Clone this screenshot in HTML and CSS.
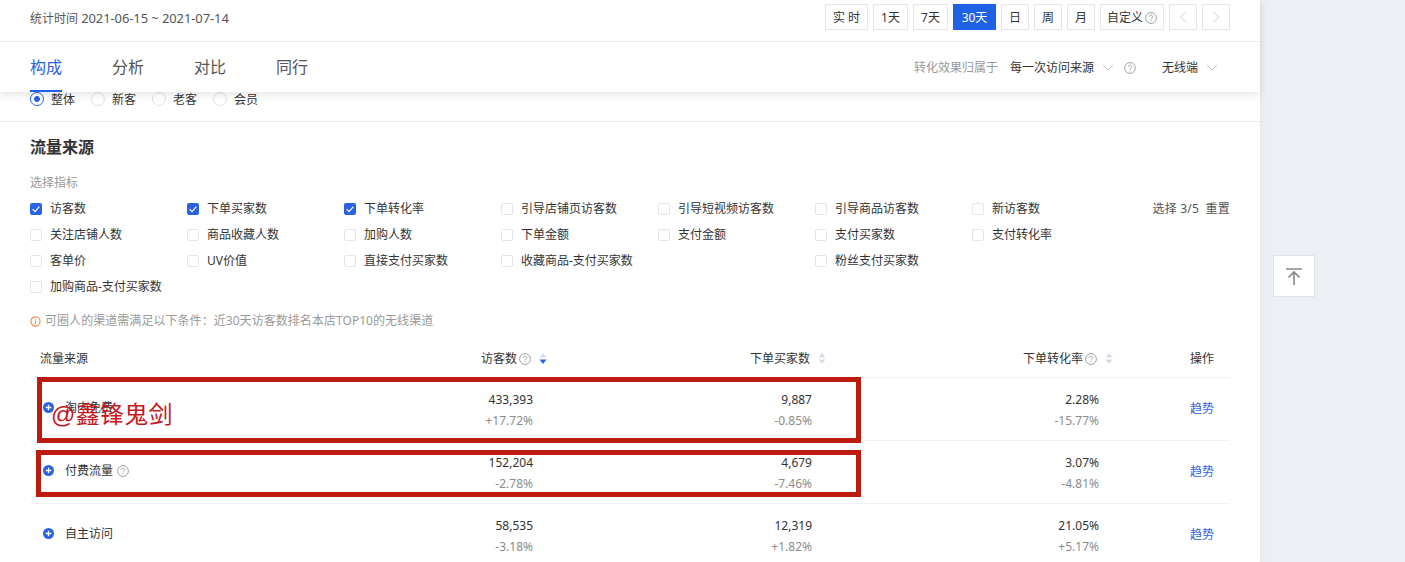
FILE: index.html
```html
<!DOCTYPE html>
<html lang="zh-CN">

<head>
    <meta charset="UTF-8">
    <title>流量来源</title>
    <link rel="stylesheet" href="styles.css">
</head>

<body>
    <svg class="defs" width="0" height="0">
        <symbol id="help" viewBox="0 0 12 12">
            <circle cx="6" cy="6" r="5.4" fill="none" stroke="currentColor" />
            <path d="M4.4 4.7a1.6 1.6 0 1 1 2.5 1.3c-.6.4-.9.7-.9 1.4" fill="none" stroke="currentColor" />
            <path d="M5.5 8.3h1v1h-1z" fill="currentColor" />
        </symbol>
        <symbol id="plus" viewBox="0 0 11 11">
            <circle cx="5.5" cy="5.5" r="5.5" fill="#2a62e6" />
            <path d="M2.7 5.5h5.6M5.5 2.7v5.6" stroke="#fff" stroke-width="1.3" />
        </symbol>
        <symbol id="tick" viewBox="0 0 12 12">
            <path d="M2.6 6.2l2.4 2.4 4.4-5" fill="none" stroke="#fff" stroke-width="1.2" />
        </symbol>
        <symbol id="chevron" viewBox="0 0 12 8">
            <path d="M1 1l5 5 5-5" fill="none" stroke="currentColor" />
        </symbol>
    </svg>

    <div class="page">
        <div class="panel">
            <header class="top">
                <div class="date-row">
                    <span class="date-text">统计时间 <span class="date-range">2021-06-15 ~ 2021-07-14</span></span>
                    <div class="ranges">
                        <button class="range w43">实 时</button>
                        <button class="range w35">1天</button>
                        <button class="range w35">7天</button>
                        <button class="range w43 active">30天</button>
                        <button class="range w28">日</button>
                        <button class="range w28">周</button>
                        <button class="range w28">月</button>
                        <button class="range w64">自定义<svg class="help-icon"><use href="#help" /></svg></button>
                        <button class="range w28 arrow">
                            <svg width="8" height="12" viewBox="0 0 8 12"><path d="M6.5 1L1.5 6l5 5" fill="none" stroke="currentColor" /></svg>
                        </button>
                        <button class="range w28 arrow">
                            <svg width="8" height="12" viewBox="0 0 8 12"><path d="M1.5 1l5 5-5 5" fill="none" stroke="currentColor" /></svg>
                        </button>
                    </div>
                </div>
                <div class="tab-row">
                    <nav class="tabs">
                        <a class="tab current">构成</a>
                        <a class="tab">分析</a>
                        <a class="tab">对比</a>
                        <a class="tab">同行</a>
                    </nav>
                    <div class="tab-options">
                        <span class="muted">转化效果归属于</span>
                        <span class="select-text first">每一次访问来源</span>
                        <svg class="chevron"><use href="#chevron" /></svg>
                        <svg class="help-icon attr-help"><use href="#help" /></svg>
                        <span class="select-text second">无线端</span>
                        <svg class="chevron"><use href="#chevron" /></svg>
                    </div>
                </div>
            </header>

            <div class="radios">
                <label class="radio"><i class="dot on"></i>整体</label>
                <label class="radio"><i class="dot"></i>新客</label>
                <label class="radio"><i class="dot"></i>老客</label>
                <label class="radio"><i class="dot"></i>会员</label>
            </div>

            <section class="content">
                <h2 class="title">流量来源</h2>
                <p class="muted pick-label">选择指标</p>

                <div class="metrics">
                    <div class="metric-grid">
                        <label class="check"><i class="box on"><svg><use href="#tick" /></svg></i>访客数</label>
                        <label class="check"><i class="box on"><svg><use href="#tick" /></svg></i>下单买家数</label>
                        <label class="check"><i class="box on"><svg><use href="#tick" /></svg></i>下单转化率</label>
                        <label class="check"><i class="box"></i>引导店铺页访客数</label>
                        <label class="check"><i class="box"></i>引导短视频访客数</label>
                        <label class="check"><i class="box"></i>引导商品访客数</label>
                        <label class="check"><i class="box"></i>新访客数</label>
                        <label class="check"><i class="box"></i>关注店铺人数</label>
                        <label class="check"><i class="box"></i>商品收藏人数</label>
                        <label class="check"><i class="box"></i>加购人数</label>
                        <label class="check"><i class="box"></i>下单金额</label>
                        <label class="check"><i class="box"></i>支付金额</label>
                        <label class="check"><i class="box"></i>支付买家数</label>
                        <label class="check"><i class="box"></i>支付转化率</label>
                        <label class="check"><i class="box"></i>客单价</label>
                        <label class="check"><i class="box"></i>UV价值</label>
                        <label class="check"><i class="box"></i>直接支付买家数</label>
                        <label class="check"><i class="box"></i>收藏商品-支付买家数</label>
                        <div></div>
                        <label class="check"><i class="box"></i>粉丝支付买家数</label>
                        <div></div>
                        <label class="check"><i class="box"></i>加购商品-支付买家数</label>
                    </div>
                    <div class="metric-count">选择 3/5&nbsp;&nbsp;重置</div>
                </div>

                <p class="note">
                    <svg class="note-icon" viewBox="0 0 12 12">
                        <circle cx="6" cy="6" r="5" fill="none" stroke="#ee8a4c" stroke-width="1.2" />
                        <path d="M6 5v3.6M6 3v1.1" stroke="#ee8a4c" stroke-width="1.2" />
                    </svg>
                    可圈人的渠道需满足以下条件：近30天访客数排名本店TOP10的无线渠道
                </p>

                <div class="table-wrap">
                    <div class="row head">
                        <div class="name">流量来源</div>
                        <div class="head-cell">访客数<svg class="help-icon"><use href="#help" /></svg>
                            <svg class="sort" viewBox="0 0 8 11"><path d="M4 0l3.5 4.500h-7z" fill="#d5dcea" /><path d="M4 11l3.5-4.500h-7z" fill="#2a62e6" /></svg>
                        </div>
                        <div class="head-cell">下单买家数
                            <svg class="sort" viewBox="0 0 8 11"><path d="M4 0l3.5 4.500h-7z" fill="#d5dcea" /><path d="M4 11l3.5-4.500h-7z" fill="#d5dcea" /></svg>
                        </div>
                        <div class="head-cell">下单转化率<svg class="help-icon"><use href="#help" /></svg>
                            <svg class="sort" viewBox="0 0 8 11"><path d="M4 0l3.5 4.500h-7z" fill="#d5dcea" /><path d="M4 11l3.5-4.500h-7z" fill="#d5dcea" /></svg>
                        </div>
                        <div class="action">操作</div>
                    </div>

                    <div class="row">
                        <div class="name"><svg class="plus"><use href="#plus" /></svg>淘内免费</div>
                        <div class="num">433,393<span>+17.72%</span></div>
                        <div class="num">9,887<span>-0.85%</span></div>
                        <div class="num">2.28%<span>-15.77%</span></div>
                        <a class="action link">趋势</a>
                    </div>
                    <div class="row">
                        <div class="name"><svg class="plus"><use href="#plus" /></svg>付费流量<svg class="help-icon name-help"><use href="#help" /></svg></div>
                        <div class="num">152,204<span>-2.78%</span></div>
                        <div class="num">4,679<span>-7.46%</span></div>
                        <div class="num">3.07%<span>-4.81%</span></div>
                        <a class="action link">趋势</a>
                    </div>
                    <div class="row">
                        <div class="name"><svg class="plus"><use href="#plus" /></svg>自主访问</div>
                        <div class="num">58,535<span>-3.18%</span></div>
                        <div class="num">12,319<span>+1.82%</span></div>
                        <div class="num">21.05%<span>+5.17%</span></div>
                        <a class="action link">趋势</a>
                    </div>

                    <div class="mark mark-one"></div>
                    <div class="mark mark-two"></div>
                    <div class="watermark">@鑫锋鬼剑</div>
                </div>
            </section>
        </div>

        <aside class="side">
            <button class="back-top">
                <svg width="16" height="17" viewBox="0 0 16 17">
                    <path d="M0 1h16M8 17V4M2.500 9.500L8 4l5.500 5.500" fill="none" stroke="#888" stroke-width="1.6" />
                </svg>
            </button>
        </aside>
    </div>
</body>

</html>
```

FILE: styles.css
```css
* {
    padding: 0;
    margin: 0;
    box-sizing: border-box;
}

html,
body {
    height: 562px;
    overflow: hidden;
    background-color: #eceff4;
}

body {
    font-family: "Noto Sans", "Noto Sans CJK SC", sans-serif;
    font-size: 12px;
    line-height: 18px;
    color: #333;
}

.defs {
    display: block;
    height: 0;
}

.page {
    display: flex;
    height: 562px;
}

.panel {
    width: 1260px;
    flex-shrink: 0;
    background-color: #fff;
    box-shadow: 1px 0 6px rgba(0, 0, 0, 0.05);
}

.side {
    padding: 255px 0 0 13px;
}

.back-top {
    display: flex;
    align-items: center;
    justify-content: center;
    width: 42px;
    height: 42px;
    background-color: #fff;
    border: 1px solid #e1e3e8;
}

.muted {
    color: #999;
}

/* header */

.top {
    position: relative;
    z-index: 2;
    background-color: #fff;
    box-shadow: 0 3px 8px rgba(0, 0, 0, 0.1);
}

.date-row {
    display: flex;
    justify-content: space-between;
    height: 42px;
    padding: 4px 30px 0;
    border-bottom: 1px solid #ebebeb;
}

.date-text {
    line-height: 28px;
    color: #555;
}

.date-range {
    font-size: 13px;
    letter-spacing: -0.1px;
}

.ranges {
    display: flex;
    gap: 5px;
}

.range {
    display: flex;
    align-items: center;
    justify-content: center;
    height: 26px;
    padding-top: 2px;
    background-color: #fff;
    border: 1px solid #e5e5e5;
    font: inherit;
    color: #333;
}

.w28 {
    width: 28px;
}

.w35 {
    width: 35px;
}

.w43 {
    width: 43px;
}

.w64 {
    width: 64px;
}

.range.active {
    background-color: #2062e6;
    border-color: #2062e6;
    color: #fff;
}

.range.arrow {
    padding-top: 0;
    color: #ccc;
}

.help-icon {
    width: 12px;
    height: 12px;
    margin-left: 2px;
    color: #a3a3a3;
    flex-shrink: 0;
}

.tab-row {
    display: flex;
    justify-content: space-between;
    height: 50px;
    padding: 0 30px;
}

.tabs {
    display: flex;
    gap: 50px;
}

.tab {
    height: 50px;
    font-size: 16px;
    line-height: 50px;
    color: #555;
}

.tab.current {
    color: #2a62e6;
    border-bottom: 2px solid #2062e6;
}

.tab-options {
    display: flex;
    align-items: center;
    padding: 2px 12px 0 0;
}

.select-text {
    color: #333;
}

.select-text.first {
    margin-left: 12px;
}

.select-text.second {
    margin-left: 26px;
}

.chevron {
    width: 12px;
    height: 8px;
    margin-left: 8px;
    color: #ccc;
}

.attr-help {
    margin-left: 10px;
}

/* radios */

.radios {
    display: flex;
    gap: 16px;
    height: 30px;
    padding-left: 30px;
    border-bottom: 1px solid #ebebeb;
}

.radio {
    display: flex;
    align-items: flex-start;
    gap: 7px;
    line-height: 16px;
}

.dot {
    width: 14px;
    height: 14px;
    border: 1px solid #e2e2e2;
    border-radius: 50%;
}

.dot.on {
    border-color: #2a62e6;
    background: radial-gradient(circle, #2a62e6 0, #2a62e6 2.6px, #fff 3.2px);
}

/* metrics */

.content {
    padding: 13px 30px 0;
}

.title {
    font-size: 16px;
    line-height: 24px;
    font-weight: 700;
    color: #333;
}

.pick-label {
    margin-top: 15px;
}

.metrics {
    display: flex;
    justify-content: space-between;
    margin-top: 4px;
}

.metric-grid {
    display: grid;
    grid-template-columns: repeat(7, 157px);
    grid-auto-rows: 26px;
}

.check {
    display: flex;
    align-items: center;
    gap: 8px;
    white-space: nowrap;
}

.box {
    width: 12px;
    height: 12px;
    border: 1px solid #e5e5e5;
    border-radius: 2px;
    flex-shrink: 0;
}

.box.on {
    border: 0;
    background-color: #2a62e6;
}

.box svg {
    display: block;
    width: 12px;
    height: 12px;
}

.metric-count {
    line-height: 26px;
    letter-spacing: 0.2px;
    white-space: nowrap;
    color: #555;
}

.note {
    display: flex;
    align-items: center;
    gap: 4px;
    margin-top: 12px;
    letter-spacing: 0.05px;
    color: #999;
}

.note-icon {
    width: 11px;
    height: 11px;
}

/* table */

.table-wrap {
    position: relative;
    margin-top: 10px;
}

.row {
    display: grid;
    grid-template-columns: 310px 208px 279px 287px 116px;
    align-items: center;
    height: 63px;
    border-bottom: 1px solid #f0f0f0;
}

.row.head {
    height: 38px;
}

.name {
    display: flex;
    align-items: center;
    padding: 0 0 2px 13px;
}

.head .name {
    padding: 0 0 0 10px;
}

.plus {
    width: 11px;
    height: 11px;
    margin: -1px 11px 0 0;
}

.name-help {
    margin-left: 4px;
}

.head-cell {
    display: flex;
    align-items: center;
    justify-content: flex-end;
    padding-right: 1px;
}

.sort {
    width: 8px;
    height: 11px;
    margin-left: 8px;
}

.num {
    padding: 2px 15px 0 0;
    text-align: right;
    line-height: 21px;
}

.num span {
    display: block;
    color: #8c8c8c;
}

.action {
    padding-left: 76px;
    white-space: nowrap;
}

.link {
    color: #2a62e6;
}

/* annotation drawn over the screenshot */

.mark {
    position: absolute;
    border: 5px solid #bc1a0c;
}

.mark-one {
    left: 7px;
    top: 37px;
    width: 824px;
    height: 66px;
}

.mark-two {
    left: 6px;
    top: 110px;
    width: 825px;
    height: 47px;
}

.watermark {
    position: absolute;
    left: 21px;
    top: 57px;
    font-family: "Liberation Sans", "Noto Sans CJK SC", sans-serif;
    font-size: 24px;
    line-height: 36px;
    letter-spacing: 0.3px;
    color: #c8161d;
}
```
